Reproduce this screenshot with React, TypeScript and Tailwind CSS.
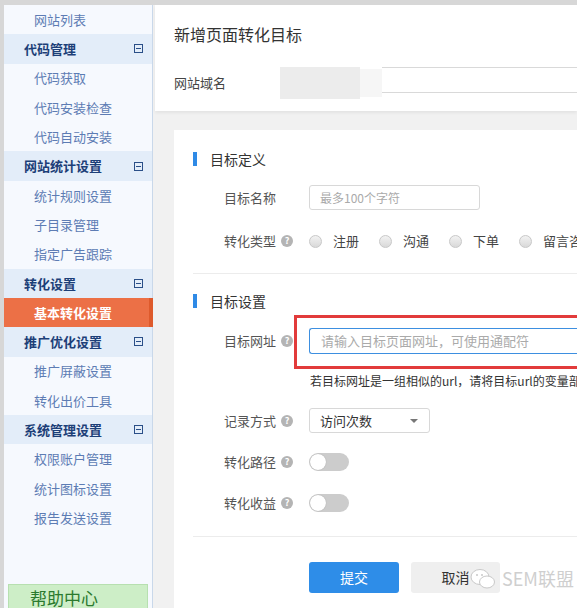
import type { ReactNode } from "react";

const FONT = "font-['Microsoft_YaHei','Noto_Sans_CJK_SC',sans-serif]";

type NavItem = { label: string; kind: "head" | "sub" | "active" };

const NAV: NavItem[] = [
  { label: "网站列表", kind: "sub" },
  { label: "代码管理", kind: "head" },
  { label: "代码获取", kind: "sub" },
  { label: "代码安装检查", kind: "sub" },
  { label: "代码自动安装", kind: "sub" },
  { label: "网站统计设置", kind: "head" },
  { label: "统计规则设置", kind: "sub" },
  { label: "子目录管理", kind: "sub" },
  { label: "指定广告跟踪", kind: "sub" },
  { label: "转化设置", kind: "head" },
  { label: "基本转化设置", kind: "active" },
  { label: "推广优化设置", kind: "head" },
  { label: "推广屏蔽设置", kind: "sub" },
  { label: "转化出价工具", kind: "sub" },
  { label: "系统管理设置", kind: "head" },
  { label: "权限账户管理", kind: "sub" },
  { label: "统计图标设置", kind: "sub" },
  { label: "报告发送设置", kind: "sub" },
];

function Collapse() {
  return (
    <span className="w-[9px] h-[9px] border border-[#2a4f88] flex items-center justify-center">
      <span className="w-[5px] h-px bg-[#2a4f88]" />
    </span>
  );
}

function Sidebar() {
  return (
    <div className="w-[149px] shrink-0 bg-[#f6f9fe] border-r border-[#c9d8ea] flex flex-col">
      {NAV.map((item) =>
        item.kind === "head" ? (
          <div
            key={item.label}
            className="h-[29.3px] bg-[#e3edf9] flex items-center justify-between pl-[20px] pr-[9px] text-[13px] font-bold text-[#1d3f78]"
          >
            {item.label}
            <Collapse />
          </div>
        ) : item.kind === "active" ? (
          <div
            key={item.label}
            className="h-[29.3px] bg-[#ec7046] border-r-4 border-[#de5a2c] -mr-px flex items-center pl-[30px] text-[13px] font-bold text-white"
          >
            {item.label}
          </div>
        ) : (
          <div key={item.label} className="h-[29.3px] flex items-center pl-[30px] text-[13px] text-[#5d7cb4]">
            {item.label}
          </div>
        ),
      )}
      <div className="flex-1" />
      <div className="mx-[4px] h-[24px] bg-[#cdeec7] border border-[#b7e0b0] border-b-0 pl-[21px] pt-[2px] text-[17px] leading-[22px] text-[#2b7a2e]">
        帮助中心
      </div>
    </div>
  );
}

function Help() {
  return (
    <span className="ml-[5px] w-[12px] h-[12px] rounded-full bg-[#b4b4b4] text-white text-[9px] font-bold leading-[12px] text-center">
      ?
    </span>
  );
}

function Row({ label, help, children, className }: { label: string; help?: boolean; children: ReactNode; className: string }) {
  return (
    <div className={`flex items-center pl-[50px] ${className}`}>
      <div className="w-[85px] shrink-0 flex items-center text-[13px] text-[#555]">
        {label}
        {help && <Help />}
      </div>
      {children}
    </div>
  );
}

function Heading({ title, className }: { title: string; className: string }) {
  return (
    <div className={`h-[20px] flex items-center pl-[19px] ${className}`}>
      <span className="w-[4px] h-[14px] bg-[#2f8ae6]" />
      <span className="ml-[13px] text-[14px] text-[#333]">{title}</span>
    </div>
  );
}

function Radio({ label }: { label: string }) {
  return (
    <div className="flex items-center mr-[20px] shrink-0">
      <span className="w-[13px] h-[13px] rounded-full border border-[#c8c8c8] bg-gradient-to-b from-[#f2f2f2] to-[#d9d9d9]" />
      <span className="ml-[11px] text-[13px] text-[#444]">{label}</span>
    </div>
  );
}

function Toggle() {
  return (
    <span className="w-[40px] h-[18px] rounded-full bg-[#cccccc] flex items-center px-px">
      <span className="w-[16px] h-[16px] rounded-full bg-white shadow-[0_0_1px_rgba(0,0,0,0.3)]" />
    </span>
  );
}

export default function App() {
  return (
    <div className={`w-[577px] h-[608px] overflow-hidden bg-[#d7d7d7] pt-[5px] pl-[4px] flex ${FONT}`}>
      <Sidebar />
      <div className="flex-1 min-w-0 bg-[#f1f1f1] flex flex-col">
        <div className="h-[106px] bg-white ml-[2px] shadow-[0_2px_3px_rgba(0,0,0,0.06)] pl-[19px]">
          <div className="pt-[19px] h-[40px] text-[16px] leading-[20px] text-[#333]">新增页面转化目标</div>
          <div className="mt-[22px] flex items-center h-[32px]">
            <span className="w-[106px] shrink-0 text-[13px] text-[#444]">网站域名</span>
            <span className="w-[80px] h-[32px] bg-[#ececec] shrink-0" />
            <span className="w-[22px] h-[28px] bg-[#f6f6f6] shrink-0" />
            <span className="flex-1 h-[26px] border-y border-[#d9d9d9] -mt-[6px]" />
          </div>
        </div>
        <div className="flex-1 mt-[19px] ml-[21px] bg-white flex flex-col pt-[19px] overflow-hidden">
          <Heading title="目标定义" className="" />
          <Row label="目标名称" className="mt-[16px] h-[25px]">
            <div className="w-[171px] h-[25px] border border-[#d8d8d8] rounded-[3px] flex items-center pl-[10px] text-[12px] text-[#aaa]">
              最多100个字符
            </div>
          </Row>
          <Row label="转化类型" help className="mt-[21px] h-[20px]">
            <Radio label="注册" />
            <Radio label="沟通" />
            <Radio label="下单" />
            <Radio label="留言咨询" />
          </Row>
          <div className="mt-[22px] ml-[19px] border-t border-[#ececec]" />
          <Heading title="目标设置" className="mt-[17px]" />
          <Row label="目标网址" help className="mt-[17px] h-[26px]">
            <div className="relative flex-1 h-[26px]">
              <div className="h-[26px] border border-[#3d8fe0] rounded-l-[3px] border-r-0 flex items-center pl-[11px] text-[13px] text-[#aaa] whitespace-nowrap">
                请输入目标页面网址，可使用通配符
              </div>
              <div className="absolute -left-[15px] -top-[13px] -right-[10px] h-[54px] border-[3px] border-[#e23b3b]" />
            </div>
          </Row>
          <div className="mt-[19px] pl-[136px] h-[16px] text-[12px] leading-[16px] text-[#333] whitespace-nowrap">
            若目标网址是一组相似的url，请将目标url的变量部分用通配符代替
          </div>
          <Row label="记录方式" help className="mt-[19px] h-[25px]">
            <div className="w-[121px] h-[25px] border border-[#d8d8d8] rounded-[3px] flex items-center justify-between pl-[10px] pr-[11px] text-[13px] text-[#333]">
              访问次数
              <span className="w-0 h-0 border-x-[4px] border-x-transparent border-t-[4px] border-t-[#777]" />
            </div>
          </Row>
          <Row label="转化路径" help className="mt-[20px] h-[18px]">
            <Toggle />
          </Row>
          <Row label="转化收益" help className="mt-[23px] h-[18px]">
            <Toggle />
          </Row>
          <div className="mt-[24px] ml-[19px] border-t border-[#ececec]" />
          <div className="mt-[25px] pl-[135px] flex items-center relative">
            <button className="w-[90px] h-[31px] rounded-[3px] bg-[#2e8de8] text-white text-[14px]">提交</button>
            <button className="ml-[12px] w-[89px] h-[31px] rounded-[3px] bg-[#efefef] text-[#333] text-[14px]">取消</button>
            <div className="absolute left-[296px] top-[3px] flex items-center text-[18px] text-[#cfcfcf] whitespace-nowrap">
              <svg width="26" height="22" viewBox="0 0 26 22" className="mr-[6px]">
                <ellipse cx="10" cy="9" rx="9" ry="7.5" fill="white" stroke="#c8c8c8" />
                <ellipse cx="17" cy="14" rx="7.5" ry="6" fill="white" stroke="#c8c8c8" />
                <circle cx="7" cy="7" r="1" fill="#c8c8c8" />
                <circle cx="12" cy="7" r="1" fill="#c8c8c8" />
              </svg>
              SEM联盟
            </div>
          </div>
        </div>
      </div>
    </div>
  );
}
